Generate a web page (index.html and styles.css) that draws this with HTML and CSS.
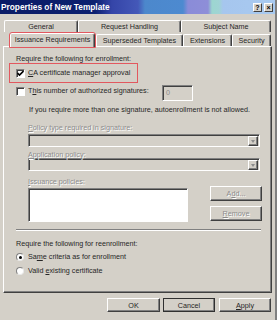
FILE: index.html
```html
<!DOCTYPE html>
<html lang="en">
    <head>
        <meta charset="UTF-8">
        <link rel="stylesheet" href="styles.css">
    </head>
    <body>
        <div class="window">
            <div class="titlebar">
                <span class="title">Properties of New Template</span>
                <div class="title_buttons">
                    <span class="title_btn help">?</span>
                    <span class="title_btn close">×</span>
                </div>
            </div>
            <div class="content">
                <div class="tab_row back_row">
                    <div class="tab tab_general">General</div>
                    <div class="tab tab_request">Request Handling</div>
                    <div class="tab tab_subject">Subject Name</div>
                </div>
                <div class="tab_row front_row">
                    <div class="tab tab_selected">Issuance Requirements</div>
                    <div class="tab tab_superseded">Superseded Templates</div>
                    <div class="tab tab_extensions">Extensions</div>
                    <div class="tab tab_security">Security</div>
                </div>
                <div class="panel">
                    <div class="line first_line">Require the following for enrollment:</div>
                    <div class="marked_row">
                        <span class="checkbox checked">
                            <svg width="7" height="7" viewBox="0 0 7 7"><path d="M0.5 3 L2.5 5 L6.5 1" fill="none" stroke="#000" stroke-width="1.6"/></svg>
                        </span>
                        <span class="label"><u>C</u>A certificate manager approval</span>
                    </div>
                    <div class="sig_row">
                        <span class="checkbox"></span>
                        <span class="label sig_label">T<u>h</u>is number of authorized signatures:</span>
                        <span class="number_box">0</span>
                    </div>
                    <div class="line note_line">If you require more than one signature, autoenrollment is not allowed.</div>
                    <div class="line field_label disabled"><u>P</u>olicy type required in signature:</div>
                    <div class="dropdown"><span class="drop_arrow"><span class="arrow"></span></span></div>
                    <div class="line field_label app_label disabled"><u>A</u>pplication policy:</div>
                    <div class="dropdown"><span class="drop_arrow"><span class="arrow"></span></span></div>
                    <div class="line field_label issuance_label disabled"><u>I</u>ssuance policies:</div>
                    <div class="list_row">
                        <div class="listbox"></div>
                        <div class="list_buttons">
                            <span class="button disabled_button">A<u>d</u>d...</span>
                            <span class="button disabled_button"><u>R</u>emove</span>
                        </div>
                    </div>
                    <div class="separator"></div>
                    <div class="line reenroll_line">Require the following for reenrollment:</div>
                    <div class="radio_row first_radio">
                        <span class="radio selected"></span>
                        <span class="label">Sa<u>m</u>e criteria as for enrollment</span>
                    </div>
                    <div class="radio_row">
                        <span class="radio"></span>
                        <span class="label">Valid <u>e</u>xisting certificate</span>
                    </div>
                </div>
                <div class="dialog_buttons">
                    <span class="button ok_button">OK</span>
                    <span class="button cancel_button">Cancel</span>
                    <span class="button apply_button"><u>A</u>pply</span>
                </div>
            </div>
        </div>
    </body>
</html>
```
FILE: styles.css
```css
body {
    width:      277px;
    height:     320px;
    margin:     0px;
    padding:    0px;
    background: #d4d0c8;
    color:      #262626;
    font-family: "Liberation Sans", Arial, sans-serif;
    font-size:  7.2px;
    overflow:   hidden;
}

.window {
    width: 275px;   height: 320px;
    border-right: 2px solid #808080;
}

/* title bar */
.titlebar {
    height: 14px;
    display: flex;
    align-items: center;
    justify-content: space-between;
    background: linear-gradient(to right,
        #0a1c66 0px, #0c2070 95px, #3545a8 112px, #4458b8 138px,
        #4c88cc 145px, #4d8ad0 183px, #8a8cd8 188px, #8e8ed8 208px,
        #9cd6d0 212px, #a0d4d4 219px, #a6c6ee 223px, #a8caf0 275px);
}
.title {
    color: #ffffff;
    font-weight: bold;
    font-size: 8.3px;
    padding-left: 1px;
}
.title_buttons {
    display: flex;
    gap: 2px;
    padding-right: 2px;
}
.title_btn {
    width: 9px;     height: 9px;
    box-sizing: border-box;
    background: #d4d0c8;
    color: #000000;
    border-top: 1px solid #ffffff;  border-left: 1px solid #ffffff;
    border-right: 1px solid #404040; border-bottom: 1px solid #404040;
    font-size: 7px;
    font-weight: bold;
    line-height: 7px;
    text-align: center;
}

.content {
    padding: 6px 0px 0px 3px;
}

/* tabs */
.tab_row {
    display: flex;
}
.tab {
    box-sizing: border-box;
    border-top: 1px solid #ffffff;
    border-left: 1px solid #ffffff;
    border-right: 1px solid #404040;
    box-shadow: inset -1px 0px #808080;
    border-radius: 2px 2px 0px 0px;
    text-align: center;
    background: #d4d0c8;
}
.back_row { height: 12px; padding-left: 1px; }
.back_row .tab { height: 12px; line-height: 11px; }
.tab_general { width: 74px; }
.tab_request { width: 103px; }
.tab_subject { width: 90px; }

.front_row { height: 14px; }
.front_row .tab { height: 12px; margin-top: 2px; line-height: 11px; }
.front_row .tab_selected {
    width: 85px;    height: 14px;
    margin: 1px 0px 0px 7px;
    line-height: 12px;
    position: relative;
    z-index: 1;
    outline: 1px solid #e2585f;
}
.tab_superseded { width: 87px; margin-left: 1px; }
.tab_extensions { width: 49px; }
.tab_security { width: 39px; }

/* panel */
.panel {
    box-sizing: border-box;
    width: 269px;   height: 247px;
    padding: 8px 0px 0px 12px;
    border-top: 1px solid #ffffff;
    border-left: 1px solid #ffffff;
    border-right: 1px solid #404040;
    border-bottom: 1px solid #404040;
    box-shadow: inset -1px -1px #808080;
}
.line { white-space: nowrap; }
.first_line { height: 8px; line-height: 8px; }

.marked_row {
    box-sizing: border-box;
    display: flex;
    align-items: center;
    width: 129px;   height: 20px;
    margin-left: -7px;
    padding-left: 6px;
    border: 1px solid #e2585f;
}
.checkbox {
    box-sizing: border-box;
    width: 9px;     height: 9px;
    margin-right: 3px;
    background: #ffffff;
    border-top: 1px solid #808080;  border-left: 1px solid #808080;
    border-right: 1px solid #ffffff; border-bottom: 1px solid #ffffff;
    box-shadow: inset 1px 1px #404040;
    display: flex;
    align-items: center;
    justify-content: center;
    flex-shrink: 0;
}
.label { white-space: nowrap; line-height: 10px; }

.sig_row {
    display: flex;
    align-items: flex-start;
    height: 16px;
    margin-top: 2px;
}
.sig_row .checkbox { margin-top: 2px; }
.sig_row .label { margin-top: 1px; }
.sig_label { width: 134px; }
.number_box {
    box-sizing: border-box;
    width: 31px;    height: 16px;
    padding-left: 3px;
    line-height: 13px;
    color: #8c8c8c;
    border-top: 1px solid #808080;  border-left: 1px solid #808080;
    border-right: 1px solid #ffffff; border-bottom: 1px solid #ffffff;
    box-shadow: inset 1px 1px #404040;
}

.note_line {
    margin: 4px 0px 0px 13px;
    height: 10px;   line-height: 10px;
}

.field_label {
    margin: 9px 0px 0px 12px;
    height: 7px;    line-height: 7px;
}
.app_label { margin-top: 4px; }
.issuance_label { margin-top: 7px; }
.disabled {
    color: #8c8c8c;
    text-shadow: 1px 1px #ffffff;
}

.dropdown {
    box-sizing: border-box;
    width: 232px;   height: 13px;
    margin: 3px 0px 0px 12px;
    border-top: 1px solid #808080;  border-left: 1px solid #808080;
    border-right: 1px solid #ffffff; border-bottom: 1px solid #ffffff;
    box-shadow: inset 1px 1px #404040;
    display: flex;
    justify-content: flex-end;
    padding: 1px 1px 0px 0px;
}
.app_label + .dropdown { margin-top: 0px; }
.drop_arrow {
    box-sizing: border-box;
    width: 10px;    height: 10px;
    background: #d4d0c8;
    border-top: 1px solid #ffffff;  border-left: 1px solid #ffffff;
    border-right: 1px solid #404040; border-bottom: 1px solid #404040;
    box-shadow: inset -1px -1px #808080;
    display: flex;
    align-items: center;
    justify-content: center;
}
.arrow {
    width: 0px;     height: 0px;
    border-left: 2.5px solid transparent;
    border-right: 2.5px solid transparent;
    border-top: 3px solid #8c8c8c;
}

.list_row {
    display: flex;
    margin: 1px 0px 0px 12px;
}
.listbox {
    box-sizing: border-box;
    width: 160px;   height: 34px;
    margin-top: 2px;
    background: #ffffff;
    border-top: 1px solid #808080;  border-left: 1px solid #808080;
    border-right: 1px solid #ffffff; border-bottom: 1px solid #ffffff;
    box-shadow: inset 1px 1px #404040;
}
.list_buttons {
    display: flex;
    flex-direction: column;
    gap: 5px;
    margin-left: 22px;
}

.button {
    box-sizing: border-box;
    display: flex;
    align-items: center;
    justify-content: center;
    background: #d4d0c8;
    border-top: 1px solid #ffffff;  border-left: 1px solid #ffffff;
    border-right: 1px solid #404040; border-bottom: 1px solid #404040;
    box-shadow: inset -1px -1px #808080;
}
.list_buttons .button { width: 52px; height: 15px; }
.disabled_button {
    color: #8c8c8c;
    text-shadow: 1px 1px #ffffff;
}

.separator {
    width: 245px;
    margin-top: 7px;
    border-top: 1px solid #808080;
    border-bottom: 1px solid #ffffff;
}
.reenroll_line {
    margin-top: 8px;
    height: 9px;    line-height: 9px;
}

.radio_row {
    display: flex;
    align-items: center;
    height: 10px;
    margin-top: 4px;
}
.radio {
    box-sizing: border-box;
    width: 8px;     height: 8px;
    margin-right: 4px;
    border-radius: 50%;
    background: #ffffff;
    border-top: 1px solid #808080;  border-left: 1px solid #808080;
    border-right: 1px solid #e8e8e8; border-bottom: 1px solid #e8e8e8;
    display: flex;
    align-items: center;
    justify-content: center;
}
.radio.selected::after {
    content: "";
    width: 3px;     height: 3px;
    border-radius: 50%;
    background: #000000;
}

.dialog_buttons {
    display: flex;
    justify-content: flex-end;
    width: 268px;
    margin-top: 5px;
}
.dialog_buttons .button { height: 14px; width: 52px; }
.ok_button { width: 53px !important; }
.cancel_button {
    margin-left: 3px;
    border-right-color: #000000;
    border-bottom-color: #000000;
    outline: 1px solid #303030;
    outline-offset: -1px;
}
.apply_button { margin-left: 4px; }
```
